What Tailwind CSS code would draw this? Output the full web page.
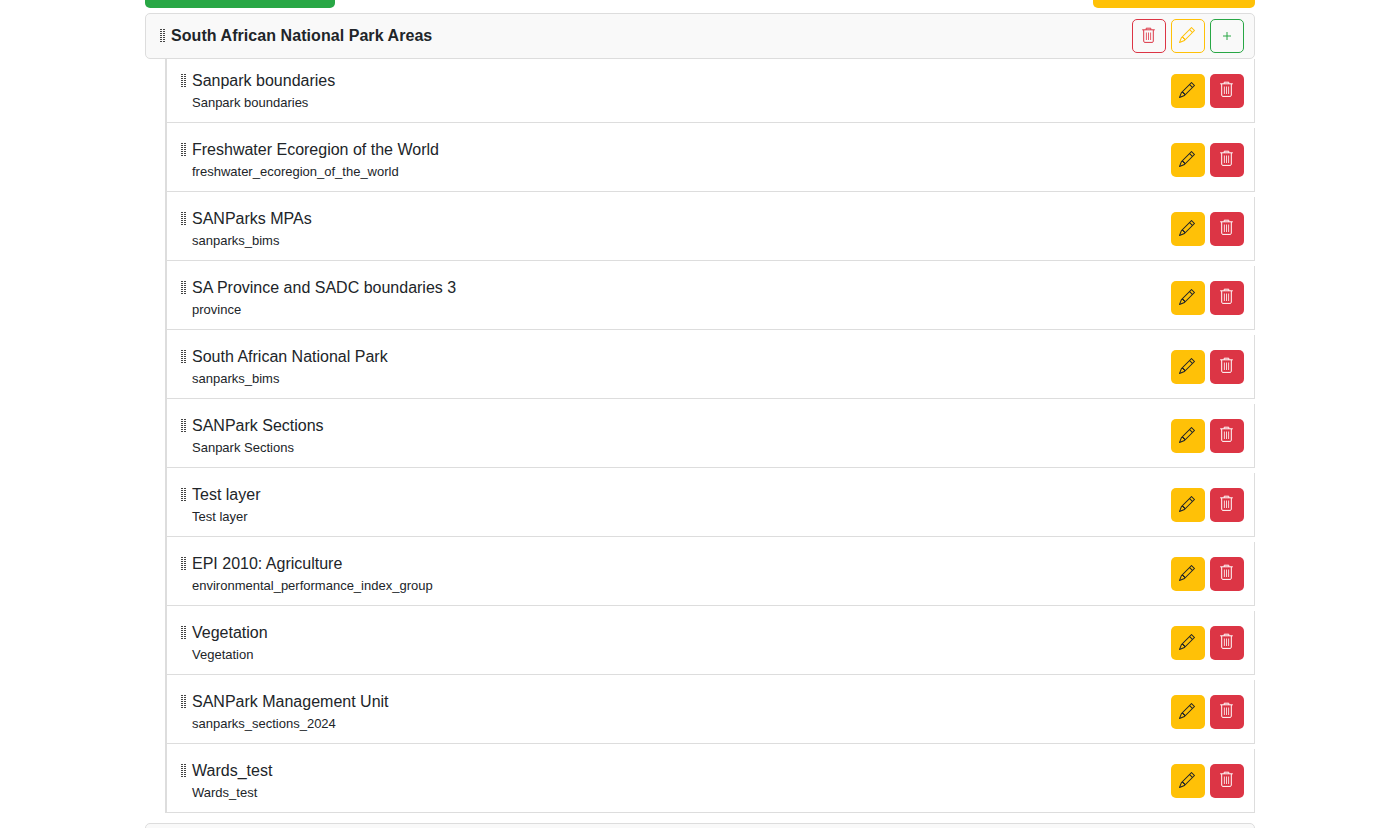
<!DOCTYPE html>
<html lang="en">
<head>
    <meta charset="UTF-8">
    <meta name="viewport" content="width=device-width, initial-scale=1.0">
    <title>Layers</title>
    <script src="https://cdn.jsdelivr.net/npm/@tailwindcss/browser@4"></script>
</head>
<body class="bg-white h-[828px] overflow-hidden font-['Liberation_Sans',Arial,sans-serif] text-[#212529]">

    <!-- Icons used by every row -->
    <svg class="hidden">
        <symbol id="pencil" viewBox="0 0 16 16">
            <path fill="currentColor" d="M12.146.146a.5.5 0 0 1 .708 0l3 3a.5.5 0 0 1 0 .708l-10 10a.5.5 0 0 1-.168.11l-5 2a.5.5 0 0 1-.65-.65l2-5a.5.5 0 0 1 .11-.168l10-10zM11.207 2.5 13.5 4.793 14.793 3.5 12.5 1.207 11.207 2.5zm1.586 3L10.5 3.207 4 9.707V10h.5a.5.5 0 0 1 .5.5v.5h.5a.5.5 0 0 1 .5.5v.5h.293l6.5-6.5zm-9.761 5.175-.106.106-1.528 3.821 3.821-1.528.106-.106A.5.5 0 0 1 5 12.5V12h-.5a.5.5 0 0 1-.5-.5V11h-.5a.5.5 0 0 1-.468-.325z"/>
        </symbol>
        <symbol id="trash" viewBox="0 0 13 16">
            <g fill="none" stroke="currentColor" stroke-width="1">
                <path d="M.2 2.8h12.6M4.2 2.8V1.2h4.6v1.6"/>
                <path d="M1.7 3v11.2a1.2 1.2 0 0 0 1.2 1.2h7.2a1.2 1.2 0 0 0 1.2-1.2V3"/>
            </g>
            <path fill="none" stroke="currentColor" stroke-width=".8" d="M4.4 5.5v7.5M6.5 5.5v7.5M8.6 5.5v7.5"/>
        </symbol>
        <symbol id="grip" viewBox="0 0 6 14">
            <path fill="currentColor" d="M0 0h2v1H0zM3 0h2v1H3zM0 2h2v1H0zM3 2h2v1H3zM0 4h2v1H0zM3 4h2v1H3zM0 6h2v1H0zM3 6h2v1H3zM0 8h2v1H0zM3 8h2v1H3zM0 10h2v1H0zM3 10h2v1H3zM0 12h2v1H0zM3 12h2v1H3z"/>
        </symbol>
    </svg>

    <div class="ml-[145px] w-[1110px]">
        <!-- Top buttons, cut off by the scroll position -->
        <div class="flex justify-between">
            <div class="w-[190px] h-2 bg-[#28a745] rounded-b-[5px]"></div>
            <div class="w-[162px] h-2 bg-[#ffc107] rounded-b-[5px]"></div>
        </div>

        <!-- Group header -->
        <div class="mt-[5px] h-[46px] flex items-center justify-between pl-[14px] pr-[10px] bg-[#f9f9f9] border border-[#dddddd] rounded-[5px]">
            <div class="flex items-center gap-[5px]">
                <svg class="w-[6px] h-[14px] text-[#444444]"><use href="#grip"/></svg>
                <span class="text-base font-bold tracking-[0.06px]">South African National Park Areas</span>
            </div>
            <div class="flex gap-[5px]">
                <button class="w-[34px] h-[34px] flex items-center justify-center border border-[#dc3545] text-[#dc3545] rounded-[5px]">
                    <svg class="w-[13px] h-4 mb-[3px] mr-[1px]"><use href="#trash"/></svg>
                </button>
                <button class="w-[34px] h-[34px] flex items-center justify-center border border-[#ffc107] text-[#ffc107] rounded-[5px]">
                    <svg class="w-4 h-4 mr-[2px] mb-[2px]"><use href="#pencil"/></svg>
                </button>
                <button class="w-[34px] h-[34px] flex items-center justify-center border border-[#28a745] text-[#28a745] rounded-[5px]">
                    <svg class="w-[10px] h-[10px]" viewBox="0 0 10 10"><path fill="none" stroke="currentColor" d="M5 1v8M1 5h8"/></svg>
                </button>
            </div>
        </div>

        <!-- Layers in the group -->
        <div id="rows" class="ml-5 border-l-2 border-[#dddddd] flex flex-col gap-[5px]"></div>

        <!-- Next group, mostly below the fold -->
        <div class="mt-[10px] h-[46px] bg-[#f9f9f9] border border-[#dddddd] rounded-[5px]"></div>
    </div>

<script>
    const layers = [
        ['Sanpark boundaries', 'Sanpark boundaries'],
        ['Freshwater Ecoregion of the World', 'freshwater_ecoregion_of_the_world'],
        ['SANParks MPAs', 'sanparks_bims'],
        ['SA Province and SADC boundaries 3', 'province'],
        ['South African National Park', 'sanparks_bims'],
        ['SANPark Sections', 'Sanpark Sections'],
        ['Test layer', 'Test layer'],
        ['EPI 2010: Agriculture', 'environmental_performance_index_group'],
        ['Vegetation', 'Vegetation'],
        ['SANPark Management Unit', 'sanparks_sections_2024'],
        ['Wards_test', 'Wards_test'],
    ];

    document.getElementById('rows').innerHTML = layers.map(([title, name]) => `
        <div class="h-16 flex items-center justify-between pl-[14px] pr-[10px] bg-white border-r border-b border-[#dddddd]">
            <div class="flex gap-[5px] mt-[3px]">
                <svg class="w-[6px] h-[14px] mt-[3px] text-[#444444]"><use href="#grip"/></svg>
                <div>
                    <div class="text-base leading-[20px]">${title}</div>
                    <div class="text-[13px] leading-[20px] mt-[2px]">${name}</div>
                </div>
            </div>
            <div class="flex gap-[5px]">
                <button class="w-[34px] h-[34px] flex items-center justify-center bg-[#ffc107] text-[#212529] rounded-[5px]">
                    <svg class="w-4 h-4 mr-[2px] mb-[2px]"><use href="#pencil"/></svg>
                </button>
                <button class="w-[34px] h-[34px] flex items-center justify-center bg-[#dc3545] text-white rounded-[5px]">
                    <svg class="w-[13px] h-4 mb-[3px] mr-[1px]"><use href="#trash"/></svg>
                </button>
            </div>
        </div>`).join('');
</script>

</body>
</html>
